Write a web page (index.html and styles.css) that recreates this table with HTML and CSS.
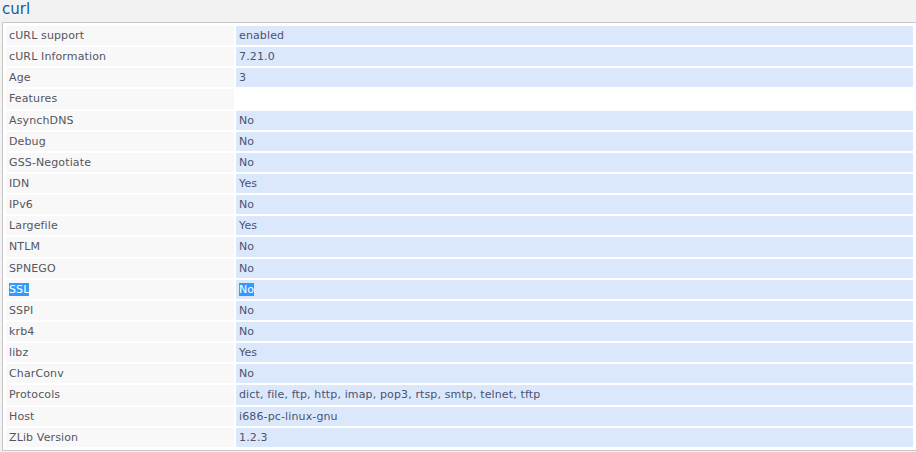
FILE: index.html
```html
<!DOCTYPE html>
<html>
<head>
<meta charset="utf-8">
<link rel="stylesheet" href="styles.css">
</head>
<body>
<h2 class="title">curl</h2>
<div class="box">
<table class="info">
<tr><td class="k">cURL support</td><td class="v">enabled</td></tr>
<tr><td class="k">cURL Information</td><td class="v">7.21.0</td></tr>
<tr><td class="k">Age</td><td class="v">3</td></tr>
<tr><td class="k">Features</td><td class="empty"></td></tr>
<tr><td class="k">AsynchDNS</td><td class="v">No</td></tr>
<tr><td class="k">Debug</td><td class="v">No</td></tr>
<tr><td class="k">GSS-Negotiate</td><td class="v">No</td></tr>
<tr><td class="k">IDN</td><td class="v">Yes</td></tr>
<tr><td class="k">IPv6</td><td class="v">No</td></tr>
<tr><td class="k">Largefile</td><td class="v">Yes</td></tr>
<tr><td class="k">NTLM</td><td class="v">No</td></tr>
<tr><td class="k">SPNEGO</td><td class="v">No</td></tr>
<tr><td class="k"><span class="sel">SSL</span></td><td class="v"><span class="sel">No</span></td></tr>
<tr><td class="k">SSPI</td><td class="v">No</td></tr>
<tr><td class="k">krb4</td><td class="v">No</td></tr>
<tr><td class="k">libz</td><td class="v">Yes</td></tr>
<tr><td class="k">CharConv</td><td class="v">No</td></tr>
<tr><td class="k">Protocols</td><td class="v">dict, file, ftp, http, imap, pop3, rtsp, smtp, telnet, tftp</td></tr>
<tr><td class="k">Host</td><td class="v">i686-pc-linux-gnu</td></tr>
<tr><td class="k">ZLib Version</td><td class="v">1.2.3</td></tr>
</table>
</div>
</body>
</html>
```
FILE: styles.css
```css
html, body {
  margin: 0;
  padding: 0;
  background: #f2f2f2;
  font-family: "DejaVu Sans", Verdana, sans-serif;
}
body {
  padding: 0 2px 0 2px;
}
.title {
  margin: 0;
  height: 22px;
  font-size: 15px;
  font-weight: normal;
  line-height: 19px;
  color: #1559a6;
  padding-left: 0;
}
.box {
  width: 911px;
  background: #fff;
  border: 1px solid #c8c8c8;
  padding: 1px;
}
.info {
  width: 100%;
  border-collapse: separate;
  border-spacing: 2px;
  font-size: 11px;
  letter-spacing: 0.13px;
}
.info td {
  padding: 0 3px;
  height: 19.15px;
  line-height: 19px;
  white-space: nowrap;
}
.k {
  width: 222px;
  background: #f8f8f8;
  color: #555560;
}
.v {
  background: #dbe8fc;
  color: #4b5272;
}
.empty {
  background: #fff;
}
.sel {
  background: #3399ff;
  color: #fff;
}
```
